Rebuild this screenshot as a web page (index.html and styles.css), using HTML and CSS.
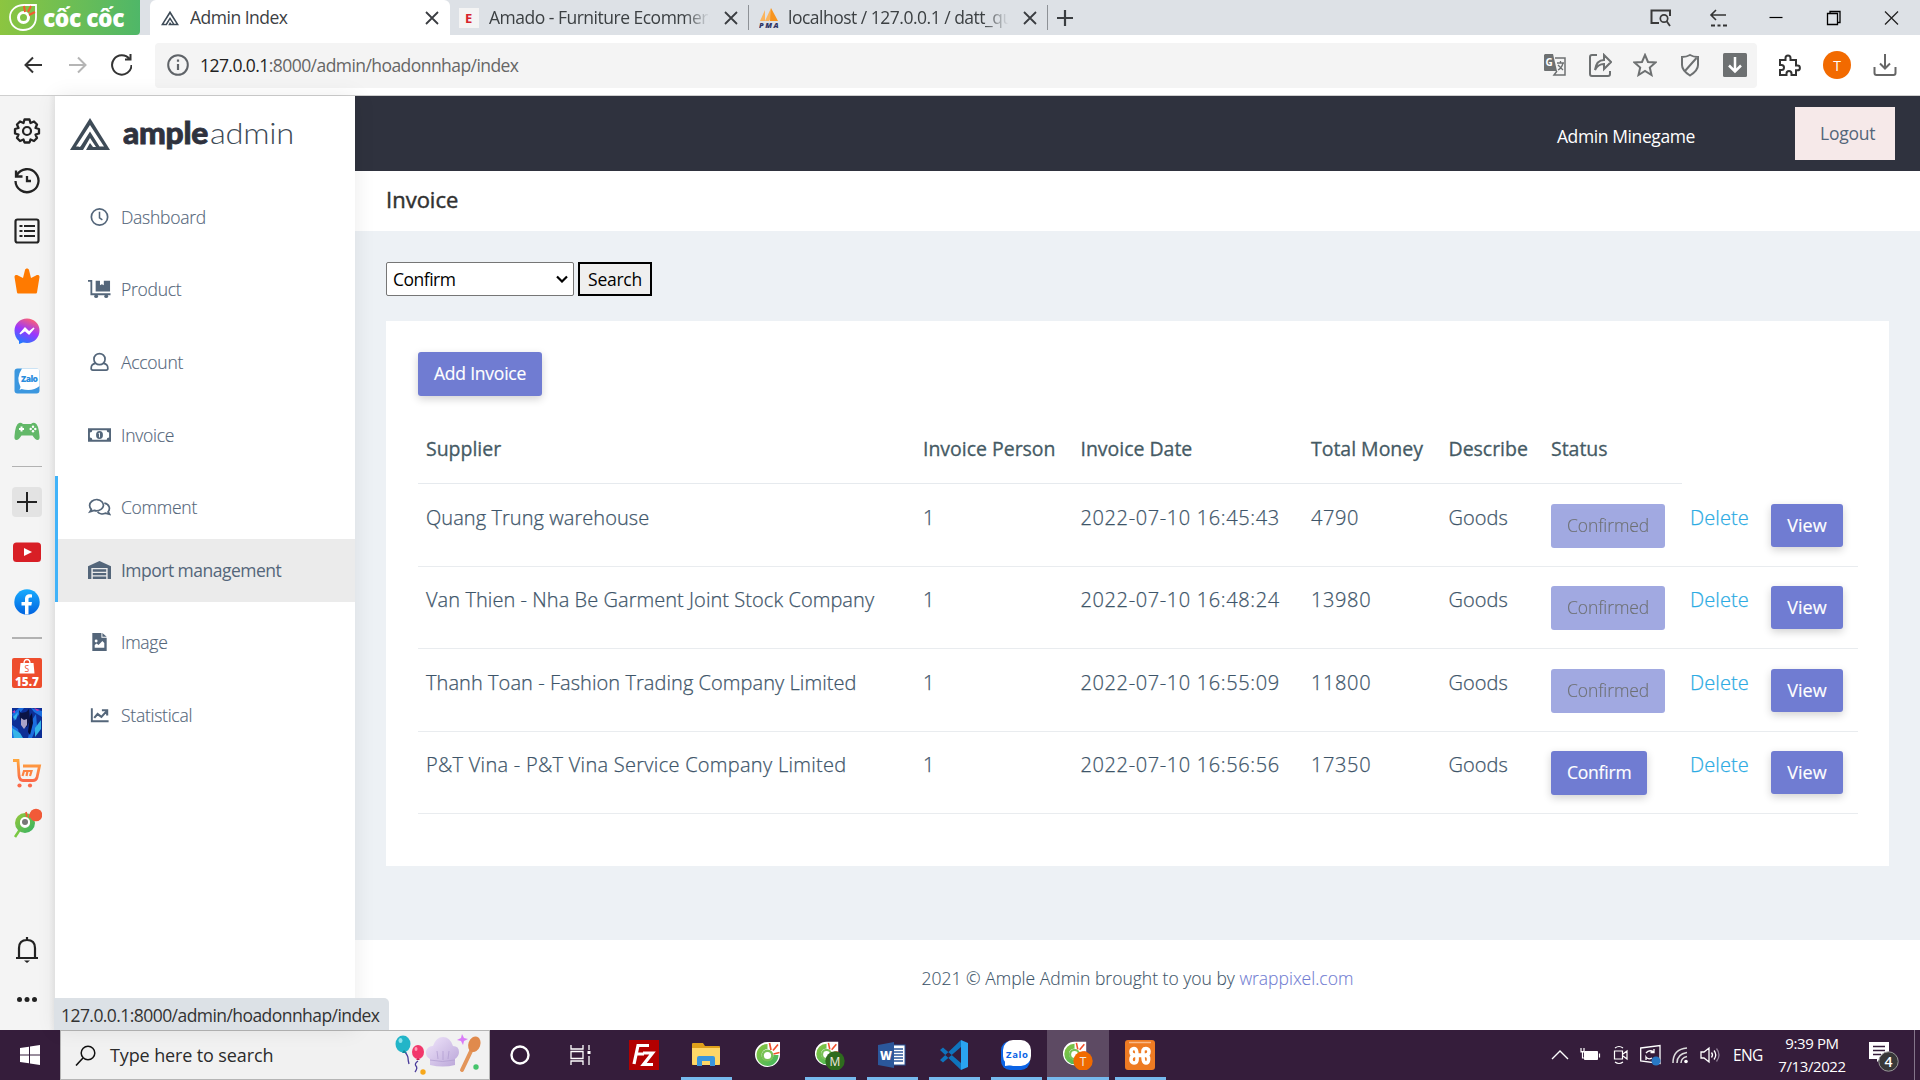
FILE: index.html
```
<!DOCTYPE html>
<html lang="en">
<head>
<meta charset="utf-8">
<title>Admin Index</title>
<link rel="stylesheet" href="styles.css">
</head>
<body>
<svg class="defs" aria-hidden="true">
  <defs>
    <linearGradient id="leaf" x1="0" y1="0" x2="1" y2="1"><stop offset="0" stop-color="#8dc63f"/><stop offset="1" stop-color="#3fb55f"/></linearGradient>
    <linearGradient id="msg" x1=".3" y1="1" x2=".7" y2="0"><stop offset="0" stop-color="#1a7dff"/><stop offset=".5" stop-color="#9a36ff"/><stop offset="1" stop-color="#ff6270"/></linearGradient>
    <linearGradient id="fb" x1="0" y1="0" x2="0" y2="1"><stop offset="0" stop-color="#18acfe"/><stop offset="1" stop-color="#0163e0"/></linearGradient>
    <linearGradient id="cart" x1="0" y1="0" x2="0" y2="1"><stop offset="0" stop-color="#ffa63d"/><stop offset="1" stop-color="#fb6a4a"/></linearGradient>
    <linearGradient id="hat" x1="0" y1="0" x2="1" y2="1"><stop offset="0" stop-color="#f1e6fb"/><stop offset="1" stop-color="#b9a5d8"/></linearGradient>
  </defs>
  <symbol id="coccoc" viewBox="0 0 30 30">
    <path d="M15 2h12v12a12.500 12.500 0 1 1-12-12z" fill="#fff"/>
    <path d="M14.500 4A11 11 0 1 0 25.500 15h-5A6 6 0 1 1 14.500 9z" fill="url(#leaf)"/>
    <circle cx="14.500" cy="15.500" r="6" fill="#79c257"/>
    <circle cx="14.500" cy="15.500" r="3.600" fill="#fff"/>
    <path d="M16.500 3l1.500 7M25 4.500l-5 6M26.500 12.500l-6 1.500" stroke="#f0502d" stroke-width="1.700" fill="none"/>
  </symbol>
  <symbol id="ample" viewBox="0 0 40 32">
    <path d="M20 0L0 32H13L20 20L26 29H23L20 25L16 32H40z M20 7L34 28.500H29.500L20 13.500L10.500 28.500H6z" fill="#3e4b57" fill-rule="evenodd"/>
    <path d="M20 10L9 29" stroke="#fff" stroke-width="1"/>
  </symbol>
</svg>

<header class="tabs">
  <div class="brand">
    <svg width="29" height="35" viewBox="0 0 29 35"><path d="M15 5h12v12c0 8-5 13-13 13S1 24 1 17 7 5 15 5z" fill="none" stroke="#fff" stroke-width="1.800"/><circle cx="14.500" cy="17.500" r="5" fill="none" stroke="#fff" stroke-width="3"/><path d="M15 6l1 6M22 6l-3 6M26 12l-6 3" stroke="#f4592f" stroke-width="2"/></svg>
    <svg class="brand-word" width="82" height="35" viewBox="0 0 82 35"><text x="0" y="27" textLength="81" lengthAdjust="spacingAndGlyphs">cốc cốc</text></svg>
  </div>
  <div class="tab tab-on">
    <svg width="18" height="16"><use href="#ample"/></svg><span class="tab-text">Admin Index</span>
    <svg class="x" width="14" height="14" viewBox="0 0 14 14"><path d="M1 1l12 12M13 1L1 13"/></svg>
  </div>
  <div class="tab">
    <svg width="20" height="20"><rect width="20" height="20" fill="#f4f4f4"/><text x="6" y="15" font-family="Open Sans" font-weight="700" font-size="13" fill="#d7232b">E</text></svg><span class="tab-text fade">Amado - Furniture Ecommerc</span>
    <svg class="x" width="14" height="14" viewBox="0 0 14 14"><path d="M1 1l12 12M13 1L1 13"/></svg>
  </div>
  <div class="tab tab-b">
    <svg width="20" height="20" viewBox="0 0 20 20"><path d="M1 13L6 2v11zM6 13L12 0v10l-2 3z" fill="#fbb45c"/><path d="M12 0l7 13h-8z" fill="#f7941e"/><text x="0" y="19.500" font-family="Open Sans" font-weight="800" font-style="italic" font-size="7.500" textLength="19" fill="#2f3565">PMA</text></svg><span class="tab-text fade">localhost / 127.0.0.1 / datt_qu</span>
    <svg class="x" width="14" height="14" viewBox="0 0 14 14"><path d="M1 1l12 12M13 1L1 13"/></svg>
  </div>
  <svg class="plus" width="16" height="16" viewBox="0 0 16 16"><path d="M8 0v16M0 8h16" stroke="#3a3d41" stroke-width="2.200"/></svg>
  <div class="win">
    <svg viewBox="0 0 22 18"><path d="M10 14H2.500V1.500H21V7" fill="none" stroke="#3a3a3a" stroke-width="2"/><circle cx="15" cy="9.500" r="3.700" fill="none" stroke="#3a3a3a" stroke-width="1.700"/><path d="M17.500 12l3.500 5" stroke="#3a3a3a" stroke-width="1.800"/></svg>
    <svg viewBox="0 0 22 18"><path d="M19 6H4M9 1L4 6l5 5" fill="none" stroke="#333" stroke-width="1.600"/><path d="M4 16.500h4M10.500 16.500h3M16 16.500h4" stroke="#333" stroke-width="1.800"/></svg>
    <svg viewBox="0 0 22 18"><path d="M4.500 8.500h13" stroke="#000" stroke-width="1.200"/></svg>
    <svg viewBox="0 0 22 18"><path d="M4.500 4.500h10v11h-10zM7 4.500v-2h10v11h-2.500" fill="none" stroke="#000" stroke-width="1.300"/></svg>
    <svg viewBox="0 0 22 18"><path d="M4 2.500l13 13M17 2.500l-13 13" stroke="#222" stroke-width="1.300"/></svg>
  </div>
</header>

<div class="toolbar">
  <svg class="nav" width="22" height="22" viewBox="0 0 22 22"><path d="M20 11H4M11 3.500L3.500 11l7.500 7.500" fill="none" stroke="#333" stroke-width="2"/></svg>
  <svg class="nav" width="22" height="22" viewBox="0 0 22 22"><path d="M3 11h16M12 3.500L19.500 11 12 18.500" fill="none" stroke="#b5b5b5" stroke-width="2"/></svg>
  <svg class="nav" width="22" height="22" viewBox="0 0 22 22"><path d="M19.500 5A9.700 9.700 0 1 0 21.500 11M20.500 0v5.500h-5.500" fill="none" stroke="#333" stroke-width="2"/></svg>
  <div class="address">
    <svg width="22" height="22" viewBox="0 0 22 22"><circle cx="11" cy="11" r="9.800" fill="none" stroke="#5f6368" stroke-width="2"/><path d="M11 10v6M11 5.500v2.200" stroke="#5f6368" stroke-width="2.200"/></svg>
    <span class="url"><b>127.0.0.1</b>:8000/admin/hoadonnhap/index</span>
    <div class="addr-icons">
      <svg viewBox="0 0 24 24"><path d="M2 1h8l4 17H2a1 1 0 0 1-1-1V2z" fill="#6d7071"/><path d="M12 5h10v17H11l3-4" fill="none" stroke="#6d7071" stroke-width="1.500"/><path d="M14 10h7M17.500 8v2M20 10c-1 4-3 6-5 7M15 12l5 5" stroke="#6d7071" stroke-width="1.300" fill="none"/><text x="2.500" y="13" font-size="10" font-weight="700" font-family="Open Sans" fill="#fff">G</text></svg>
      <svg viewBox="0 0 24 24"><path d="M9 2H4a2 2 0 0 0-2 2v17a2 2 0 0 0 2 2h16a2 2 0 0 0 2-2v-3M7 17c1-7 4-10 9-10V2l7 7-7 7v-5c-4 0-7 2-9 6z" fill="none" stroke="#6d7071" stroke-width="2"/></svg>
      <svg viewBox="0 0 24 24"><path d="M12 2l3 7 7.500.5-5.700 5 1.700 7.500-6.500-4-6.500 4 1.700-7.500-5.700-5L9 9z" fill="none" stroke="#6d7071" stroke-width="2"/></svg>
      <svg viewBox="0 0 24 24"><path d="M12 2q3.500 2 8 2v8c0 5-4 8-8 10.500-4-2.500-8-5.500-8-10.500V4q4.500 0 8-2zM6.500 18.500L18.500 5" fill="none" stroke="#6d7071" stroke-width="2"/></svg>
      <svg viewBox="0 0 24 24"><rect width="24" height="24" rx="1.500" fill="#6d7071"/><path d="M12 4v14M6 12.500l6 6 6-6" fill="none" stroke="#fff" stroke-width="2.500"/></svg>
    </div>
  </div>
  <svg class="ext" width="24" height="24" viewBox="0 0 24 24"><path d="M3 7h5.500V5a2.500 2.500 0 0 1 5 0v2H19v5.500h1.500a2.300 2.300 0 0 1 0 4.800H19V22h-4.500v-1.500a2.500 2.500 0 0 0-5 0V22H3v-5h1.500a2.500 2.500 0 0 0 0-5H3z" fill="none" stroke="#333" stroke-width="2"/></svg>
  <span class="avatar">T</span>
  <svg width="24" height="24" viewBox="0 0 24 24"><path d="M12 1v14M7 10.500l5 5 5-5M1.500 14v6a2 2 0 0 0 2 2h17a2 2 0 0 0 2-2v-6" fill="none" stroke="#666" stroke-width="2"/></svg>
</div>

<div class="viewport">
  <aside class="rail">
    <svg viewBox="0 0 30 30"><path d="M12.500 3.500h5l1 3.500 3.500-1.500 3 3-1.500 3.500 3.500 1v4.500l-3.500 1 1.500 3.500-3 3-3.500-1.500-1 3h-5l-1-3L8 25l-3-3 1.500-3.500-3.500-1V13l3.500-1L5 8.500l3-3L11.500 7z" fill="none" stroke="#222" stroke-width="2.300" stroke-linejoin="round"/><circle cx="15" cy="15" r="4" fill="none" stroke="#222" stroke-width="2.200"/></svg>
    <svg viewBox="0 0 30 30"><path d="M4 4.500v6h6.500M5 9a11.500 11.500 0 1 1-1.500 6M15 10v5h4" fill="none" stroke="#222" stroke-width="2.300"/></svg>
    <svg viewBox="0 0 30 30"><rect x="3.500" y="3.500" width="23" height="23" rx="2" fill="none" stroke="#222" stroke-width="2.200"/><path d="M7.500 10h3M12 10h11M7.500 15h3M12 15h11M7.500 20h3M12 20h11" stroke="#222" stroke-width="2.100"/></svg>
    <svg viewBox="0 0 30 30"><path d="M2.500 11c0-2 2-2.500 3.500-1.500l5 2.500 2-8c.5-2 3.500-2 4 0l2 8 5-2.500c1.500-1 3.500-.5 3.500 1.500L25 26.500c-.3 1-1 1-2 1H7c-1 0-1.700 0-2-1z" fill="#ff7a00"/></svg>
    <svg viewBox="0 0 30 30"><path d="M15 2.500c7 0 12.500 5 12.500 12S22 27 15 27l-4-.5-4 1.500v-3C4 22.500 2.500 19 2.500 14.500c0-7 5.500-12 12.500-12z" fill="url(#msg)"/><path d="M8 18l5-6 4 4 5-4-5 6-4-3.500z" fill="#fff" stroke="#fff" stroke-width="1.500"/></svg>
    <svg viewBox="0 0 30 30"><rect x="2.500" y="2.500" width="25" height="25" rx="3" fill="#3b97df"/><path d="M10 2.500h15q2.500 0 2.500 2.500v15q-7 6-18 3l-2 1 1-3q-5-9 1.500-18.500z" fill="#fff"/><text x="9" y="15.500" font-size="8.500" font-family="Open Sans" font-weight="800" textLength="17" fill="#2a8ddd">Zalo</text></svg>
    <svg viewBox="0 0 30 30"><path d="M7 7q2-1 4 1h8q2-2 4-1 3.500 1 4.500 13 .5 4-2 4-2 0-5-4.500h-11Q6.500 24 4.500 24 2 24 2.500 20 3.500 8 7 7z" fill="#62b868"/><path d="M9.500 10.500v5M7 13h5" stroke="#fff" stroke-width="2"/><g fill="#fff"><circle cx="21" cy="10.800" r="1.200"/><circle cx="21" cy="15.200" r="1.200"/><circle cx="18.700" cy="13" r="1.200"/><circle cx="23.300" cy="13" r="1.200"/></g></svg>
    <i class="rule"></i>
    <svg class="add" viewBox="0 0 30 30"><path d="M15 5v20M5 15h20" stroke="#222" stroke-width="2"/></svg>
    <svg viewBox="0 0 30 30"><rect x="1" y="5.500" width="28" height="19.500" rx="3.500" fill="#d81f26"/><path d="M12 11l8 4-8 4z" fill="#fff"/></svg>
    <svg viewBox="0 0 30 30"><circle cx="15" cy="15" r="12.700" fill="url(#fb)"/><path d="M13 27.500v-9H9.500V15H13v-2.500c0-4 2-5.700 7-5v3c-3 0-3.500.2-3.500 2V15H20l-.7 3.500h-2.800v9z" fill="#fff"/></svg>
    <i class="rule thick"></i>
    <svg viewBox="0 0 30 30"><rect width="30" height="30" rx="2" fill="#ee4d2d"/><path d="M8.500 5h13l1 10.500h-15z" fill="#fff"/><path d="M12 5.500q0-4 3-4t3 4" stroke="#fff" stroke-width="1.300" fill="none"/><text x="12.500" y="13.500" font-size="8.500" font-family="Open Sans" fill="#ee4d2d">S</text><text x="3" y="27.500" font-size="12.500" font-family="Open Sans" font-weight="800" textLength="24" lengthAdjust="spacingAndGlyphs" fill="#fff">15.7</text></svg>
    <svg viewBox="0 0 30 30"><rect width="30" height="30" fill="#0d2f96"/><path d="M0 6l7-6h5L2 13zM19 0l11 3v6l-8-5zM0 17l6 4 2 9H0zM20 12l4-6 1 12-5 12h-4z" fill="#1b6fe0"/><path d="M0 20l8 5 3 5H2zM23 20l6-8v9l-6 8zM1 9l5-5-2 8z" fill="#35b4e8"/><path d="M7 2l2 3 5-1 3-3 1 11-3 7-4-2-3-6z" fill="#0b1445"/><path d="M9 10l3 2 3-1v6l-3 4-3-4z" fill="#a9a3c8"/><path d="M18 8l2-3 1 10-3 12-2-3z" fill="#060b33"/><path d="M22 0l6 2-3 1zM0 4l3-2v3z" fill="#c43ab0"/></svg>
    <svg viewBox="0 0 30 30"><path d="M1 2.500h5l1 15q.5 5 4 5h10q3 0 4-3l2.500-11.500H11" fill="none" stroke="url(#cart)" stroke-width="2.800"/><path d="M10.500 18l1.500-5h7.500L18 18M15.500 13l-1 5" fill="none" stroke="#fd8342" stroke-width="2.200"/><circle cx="7.500" cy="27.500" r="2.100" fill="#fb6a4a"/><circle cx="18" cy="27.500" r="2.100" fill="#fb6a4a"/></svg>
    <svg viewBox="0 0 30 30"><path d="M9 20l-6 9" stroke="#7ac943" stroke-width="2.500"/><circle cx="13" cy="15" r="7.500" fill="none" stroke="url(#leaf)" stroke-width="5"/><circle cx="13" cy="14" r="5" fill="#fff"/><circle cx="13" cy="14" r="3" fill="#777"/><path d="M14 4l1 5M18.500 6l-1 4" stroke="#f15a38" stroke-width="1.800"/><circle cx="24" cy="7" r="6.300" fill="#f15a38"/></svg>
    <svg class="bell" viewBox="0 0 30 30"><path d="M7 22V13q0-8 8-8t8 8v9M4 23h22M15 2v3" fill="none" stroke="#222" stroke-width="2.200"/><path d="M12 25.500h6l-3 2.500z" fill="#222"/></svg>
    <svg viewBox="0 0 30 30"><g fill="#222"><circle cx="7.500" cy="14.500" r="2.500"/><circle cx="15" cy="14.500" r="2.500"/><circle cx="22.500" cy="14.500" r="2.500"/></g></svg>
  </aside>

  <nav class="sidebar">
    <div class="logo"><svg width="40" height="32"><use href="#ample"/></svg>
      <svg width="172" height="40" viewBox="0 0 172 40"><text x="0" y="26" class="lg-b" textLength="85" lengthAdjust="spacingAndGlyphs">ample</text><text x="87" y="26" class="lg-l" textLength="84" lengthAdjust="spacingAndGlyphs">admin</text></svg></div>
    <a class="item"><svg viewBox="0 0 24 20"><circle cx="12" cy="10" r="8.500" fill="none" stroke="#54667a" stroke-width="1.800"/><path d="M12 4.500V11l3 2" fill="none" stroke="#54667a" stroke-width="1.600"/></svg>Dashboard</a>
    <a class="item"><svg viewBox="0 0 24 20"><path d="M0 1.500h3.500V15.500h20" fill="none" stroke="#54667a" stroke-width="1.900"/><path d="M8 1.500h4.500v4.500l2-1 2 1V1.500H23v11H8z" fill="#54667a"/><circle cx="8.500" cy="17.500" r="2" fill="#54667a"/><circle cx="19" cy="17.500" r="2" fill="#54667a"/></svg>Product</a>
    <a class="item"><svg viewBox="0 0 24 20"><circle cx="12" cy="7" r="5.800" fill="none" stroke="#54667a" stroke-width="1.800"/><path d="M8 11.500q-4.700.5-4.700 5 0 2 1.700 2h14q1.700 0 1.700-2 0-4.500-4.700-5" fill="none" stroke="#54667a" stroke-width="1.800"/></svg>Account</a>
    <a class="item"><svg viewBox="0 0 24 20"><path d="M0 3h24v14H0z M4.500 5q0 2.500-2.500 2.500v5q2.500 0 2.500 2.500h15q0-2.500 2.500-2.500v-5q-2.500 0-2.500-2.500z" fill="#54667a" fill-rule="evenodd"/><ellipse cx="12" cy="10" rx="3.600" ry="4.200" fill="#54667a"/><path d="M11 8.500l1-.5v4.500" stroke="#fff" fill="none"/></svg>Invoice</a>
    <a class="item edge"><svg viewBox="0 0 24 20"><path d="M3.500 12.500C1 10 1 6.500 4 4S12 1.500 14.500 4.500s2 6-1 8-6 1.500-7 1l-4.500 1.500z" fill="none" stroke="#54667a" stroke-width="1.800"/><path d="M17 6c5.500 1 6.500 6 4 9l1.500 2.500-4.500-1c-3 1.300-6.500.5-8-1.500" fill="none" stroke="#54667a" stroke-width="1.800"/></svg>Comment</a>
    <a class="item edge current"><svg viewBox="0 0 24 20"><path d="M0 19.500V6L12 .5 24 6v13.500h-3.500V8h-17v11.500z" fill="#54667a"/><path d="M5 10.500h14M5 14.300h14M5 18.100h14" stroke="#54667a" stroke-width="2.400"/></svg>Import management</a>
    <a class="item gap"><svg viewBox="0 0 24 20"><path d="M4.500.5H14v5h5.500v14h-15z" fill="#54667a"/><path d="M15 .5l4.500 4H15z" fill="#54667a"/><circle cx="8.500" cy="9" r="1.500" fill="#fff"/><path d="M7 16v-3l2-1.500 2 1.500 4-4 2 2v5z" fill="#fff"/></svg>Image</a>
    <a class="item"><svg viewBox="0 0 24 20"><path d="M4 3v13.500h17.500" fill="none" stroke="#54667a" stroke-width="2"/><path d="M6.500 13L10 9l4 3 5-5.500M14.500 5H20v5.500" fill="none" stroke="#54667a" stroke-width="2.200"/></svg>Statistical</a>
  </nav>

  <main class="page">
    <div class="topbar"><span class="user">Admin Minegame</span><a class="logout">Logout</a></div>
    <h4 class="title">Invoice</h4>
    <section class="content">
      <form class="filter">
        <div class="select"><span>Confirm</span><svg width="12" height="8" viewBox="0 0 12 8"><path d="M1 1.500l5 5 5-5" fill="none" stroke="#000" stroke-width="2.200"/></svg></div>
        <div class="search">Search</div>
      </form>
      <div class="card">
        <a class="btn">Add Invoice</a>
        <table class="grid">
          <colgroup><col class="c1"><col class="c2"><col class="c3"><col class="c4"><col class="c5"><col class="c6"><col class="c7"><col class="c8"></colgroup>
          <tr><th>Supplier</th><th>Invoice Person</th><th>Invoice Date</th><th>Total Money</th><th>Describe</th><th>Status</th><td class="blank"></td><td class="blank"></td></tr>
          <tr><td>Quang Trung warehouse</td><td class="n">1</td><td class="n">2022-07-10 16:45:43</td><td class="n">4790</td><td>Goods</td><td><a class="btn off">Confirmed</a></td><td><a class="del">Delete</a></td><td><a class="btn view">View</a></td></tr>
          <tr><td>Van Thien - Nha Be Garment Joint Stock Company</td><td class="n">1</td><td class="n">2022-07-10 16:48:24</td><td class="n">13980</td><td>Goods</td><td><a class="btn off">Confirmed</a></td><td><a class="del">Delete</a></td><td><a class="btn view">View</a></td></tr>
          <tr><td>Thanh Toan - Fashion Trading Company Limited</td><td class="n">1</td><td class="n">2022-07-10 16:55:09</td><td class="n">11800</td><td>Goods</td><td><a class="btn off">Confirmed</a></td><td><a class="del">Delete</a></td><td><a class="btn view">View</a></td></tr>
          <tr><td class="wide">P&amp;T Vina - P&amp;T Vina Service Company Limited</td><td class="n">1</td><td class="n">2022-07-10 16:56:56</td><td class="n">17350</td><td>Goods</td><td><a class="btn">Confirm</a></td><td><a class="del">Delete</a></td><td><a class="btn view">View</a></td></tr>
        </table>
      </div>
    </section>
    <footer class="foot">2021 © Ample Admin brought to you by&nbsp;<a>wrappixel.com</a></footer>
  </main>
  <div class="status">127.0.0.1:8000/admin/hoadonnhap/index</div>
</div>

<div class="taskbar">
  <div class="start"><svg width="20" height="20" viewBox="0 0 20 20"><path d="M0 3l9-1.300V9.500H0zM10 1.500L20 0v9.500H10zM0 10.500h9v7.800L0 17zM10 10.500h10V20l-10-1.500z" fill="#fff"/></svg></div>
  <div class="find">
    <svg width="21" height="21" viewBox="0 0 21 21"><circle cx="13" cy="8" r="6.800" fill="none" stroke="#111" stroke-width="1.500"/><path d="M8 13l-7 7.500" stroke="#111" stroke-width="1.600"/></svg>
    <span>Type here to search</span>
    <svg class="party" width="88" height="42" viewBox="0 0 88 42"><ellipse cx="8" cy="10" rx="7.500" ry="8.500" fill="#22b5c8"/><ellipse cx="5.500" cy="6.500" rx="2" ry="2.500" fill="#8be3ec"/><path d="M10 18q3 4 3 6t1 6M23 27q-4 3-2 5t-1 6" stroke="#4a3c9a" fill="none" stroke-width="1.300"/><path d="M7 19l2-3 3 3z" fill="#128a9c"/><ellipse cx="23" cy="18" rx="6" ry="7" fill="#f2376b"/><path d="M21 26l2-2 2 2z" fill="#c71f50"/><ellipse cx="21" cy="15" rx="1.500" ry="2" fill="#ff9ab5"/><path d="M35 25q-5-3-4-8 2-5 7-5 3-9 10-9t10 9q6 0 6 6 0 4-4 7v6q-12 3-25 0z" fill="url(#hat)"/><path d="M35 26q12 3 25 0M42 17l1 8M48 17v9M54 17l-1 8" stroke="#b29fd2" fill="none" stroke-width=".8"/><path d="M67 0l2 4 4 1-4 2-1 4-2-4-4-1 4-2z" fill="#d97bf7"/><path d="M77 15L67 36" stroke="#e39559" stroke-width="4" stroke-linecap="round"/><ellipse cx="79.500" cy="10.500" rx="6" ry="8" transform="rotate(20 80 10)" fill="#e08a4c"/><circle cx="28" cy="38" r="2.700" fill="#f7a81b"/><circle cx="81" cy="33" r="2.700" fill="#45c46b"/></svg>
  </div>
  <div class="slot first"><svg width="22" height="22" viewBox="0 0 22 22"><circle cx="11" cy="11" r="8.500" fill="none" stroke="#fff" stroke-width="2.400"/></svg></div>
  <div class="slot second"><svg width="22" height="20" viewBox="0 0 22 20"><path d="M1 0v4h12V0M1 20v-4h12v4M1 6.500h12v7H1zM19 0v5M19 11v9" fill="none" stroke="#fff" stroke-width="1.300"/><path d="M17.500 6h3v3h-3z" fill="#fff"/></svg></div>
  <div class="slot"><svg viewBox="0 0 30 30"><rect width="30" height="30" fill="#b30000"/><path d="M5 24L9 5.500h11M7 14H15M14 13h9.500L14.500 24.500H24" fill="none" stroke="#fff" stroke-width="3.200"/></svg></div>
  <div class="slot run"><svg viewBox="0 0 30 30"><path d="M1 4q0-1 1-1h10l2 3h14q1 0 1 1v18H1z" fill="#dfa01a"/><path d="M1 8h28v15q0 2-2 2H3q-2 0-2-2z" fill="#ffd767"/><path d="M6 26v-8q0-2 2-2h14q2 0 2 2v8h-5v-5h-8v5z" fill="#3a96dd"/></svg></div>
  <div class="slot"><svg viewBox="0 0 30 30"><use href="#coccoc"/></svg></div>
  <div class="slot run"><svg viewBox="0 0 30 30"><use href="#coccoc" x="-2" width="28" height="28"/><circle cx="20" cy="21" r="9.700" fill="#2e6b1e"/><text x="14.500" y="25.500" class="badge-t">M</text></svg></div>
  <div class="slot run"><svg viewBox="0 0 30 30"><rect x="14" y="5" width="14" height="20" fill="#fff" stroke="#2b579a"/><path d="M17 9h9M17 12h9M17 15h9M17 18h9M17 21h9" stroke="#2b579a" stroke-width="1.400"/><path d="M1 5l16-3v26L1 25z" fill="#2b579a"/><text x="3" y="20" font-family="Open Sans" font-weight="800" font-size="12" textLength="12" lengthAdjust="spacingAndGlyphs" fill="#fff">W</text></svg></div>
  <div class="slot run"><svg viewBox="0 0 30 30"><path d="M1 10l3-2.500L22 23v7zM1 20l3 2.500L22 7V0z" fill="#0f74bd"/><path d="M22 0l7 3v24l-7 3z" fill="#2aa4f0"/></svg></div>
  <div class="slot run"><svg viewBox="0 0 30 30"><rect y="1" width="29" height="29" rx="9" fill="#0b63e5"/><rect x="2" width="28" height="26" rx="10" fill="#fff"/><path d="M4 20v6l7-1z" fill="#fff"/><text x="5" y="17.500" font-size="9.500" font-family="Open Sans" font-weight="700" textLength="22" fill="#0b63e5">Zalo</text></svg></div>
  <div class="slot run active"><svg viewBox="0 0 30 30"><use href="#coccoc" x="-2" width="28" height="28"/><circle cx="20" cy="21" r="9.700" fill="#f06a00"/><text x="16.800" y="25.500" class="badge-t">T</text></svg></div>
  <div class="slot run"><svg viewBox="0 0 30 30"><rect width="30" height="30" rx="3" fill="#ee7b23"/><path d="M9 8.500c-4 0-4 6 0 6.500h12c4-.5 4-6.500 0-6.500s-3 3-3 6.500 0 8 3 8 4-7 0-7.500H9c-4 .5-4 7.500 0 7.500s3-4.500 3-8-1-6.500-3-6.500z" fill="none" stroke="#fff" stroke-width="3.600"/><path d="M4 2.500h22" stroke="#f8b98a" stroke-width="1.500"/></svg></div>
  <div class="tray">
    <svg viewBox="-7 0 30 24"><path d="M0 16l8-8 8 8" fill="none" stroke="#fff" stroke-width="1.400"/></svg>
    <svg viewBox="-5 0 30 24"><path d="M4.500 8.500h13v8h-13z" fill="#fff" stroke="#fff"/><path d="M19.500 10.500v4M2.500 9v6h2M.5 8.500h4M1 5v4h3V5" stroke="#fff" stroke-width="1.200" fill="none"/></svg>
    <svg viewBox="-8 0 30 24"><path d="M1.500 8h8v8h-8zM10 11l4-3v8l-4-3M2 5q4-3 8 0M2 19q4 3 8 0" fill="none" stroke="#fff" stroke-width="1.200"/></svg>
    <svg viewBox="-5 0 30 24"><path d="M.7 5L20 2.500v18L.7 18z" fill="none" stroke="#fff" stroke-width="1.300"/><path d="M6 10q3-4 8-1M14 6v3.500h-3.500M12 15q-4 2-6-1v3" fill="none" stroke="#fff" stroke-width="1.300"/><circle cx="16" cy="18" r="4.500" fill="#2878c5"/></svg>
    <svg viewBox="-7 0 30 24"><path d="M1 20Q1 6 15 5M5 20q0-9 10-10.500M9 20q0-5 6-6.500" fill="none" stroke="#ddd" stroke-width="1.500"/><circle cx="14" cy="18.500" r="1.800" fill="#fff"/></svg>
    <svg viewBox="-5 0 30 24"><path d="M1 9h3l5-4v14l-5-4H1zM11.500 9.500q2 2.500 0 5M14 7.500q3.500 4.500 0 9" fill="none" stroke="#fff" stroke-width="1.300"/><path d="M16.500 5.500q5 6.500 0 13" fill="none" stroke="#8f7e96" stroke-width="1.300"/></svg>
    <span class="lang">ENG</span>
    <div class="clock"><span>9:39 PM</span><span>7/13/2022</span></div>
    <div class="note"><svg width="32" height="32" viewBox="0 0 32 32"><path d="M1 1h20v17h-9l-3 3v-3H1z" fill="#fff"/><path d="M5 5.500h12M5 9.500h12M5 13.500h8" stroke="#351d3b" stroke-width="1.300"/><circle cx="20.500" cy="20.500" r="9.700" fill="#383838" stroke="#999"/><text x="16.500" y="25.500" font-family="Open Sans" font-weight="600" font-size="14" fill="#fff">4</text></svg></div>
    <i class="desk"></i>
  </div>
</div>
</body>
</html>
```
FILE: styles.css
```
*{box-sizing:border-box}
body{margin:0;width:1920px;height:1080px;overflow:hidden;display:flex;flex-direction:column;font-family:"Open Sans","Noto Sans",sans-serif;background:#fff}
svg{display:block;flex:none}
.defs{position:absolute;width:0;height:0}

/* tab strip */
.tabs{height:35px;background:#dde1e6;display:flex;align-items:center;font-size:17.500px;letter-spacing:-.5px;color:#3c4043;flex:none}
.brand{width:140px;height:35px;background:linear-gradient(90deg,#8cc540,#4fb768);display:flex;padding-left:9px;gap:5px;border-radius:0 0 4px 0}
.brand-word text{font:800 25px "Open Sans",sans-serif;fill:#fff}
.tab{display:flex;align-items:center;height:35px;padding-left:9px;width:299px;position:relative}
.tab:not(.tab-on)::after{content:"";position:absolute;right:0;top:5px;width:1px;height:25px;background:#8d9196}
.tab-on{background:#fff;margin-left:10px;width:300px;padding-left:11px;border-radius:6px 6px 0 0}
.tab-text{width:223px;margin-left:10px;overflow:hidden;white-space:nowrap;line-height:30px;padding-bottom:1px}
.tab-on .tab-text{width:227px;margin-left:11px}
.tab-b{padding-left:10px}
.tab-b .tab-text{width:223px;margin-left:9px}
.fade{-webkit-mask-image:linear-gradient(90deg,#000 88%,transparent 99%);mask-image:linear-gradient(90deg,#000 88%,transparent 99%)}
.x{margin-left:12px;stroke:#3a3d41;stroke-width:1.800}
.tab-on .x{margin-left:8px}
.plus{margin-left:9px}
.win{margin-left:auto;display:flex;gap:36px;padding-right:17px}
.win svg{width:22px;height:18px}

/* toolbar */
.toolbar{height:61px;border-bottom:1px solid #cfcfcf;display:flex;align-items:center;padding-left:22px;flex:none}
.nav{margin-right:22px}
.address{width:1602px;height:45px;background:#f4f4f4;border-radius:4px;display:flex;align-items:center;padding:0 10px 0 12px;margin-left:1px}
.url{font-size:17.500px;letter-spacing:-.56px;color:#666;margin-left:11px}
.url b{font-weight:400;color:#222}
.addr-icons{display:flex;gap:21px;margin-left:auto}
.addr-icons svg{width:24px;height:24px}
.ext{margin-left:20px}
.avatar{width:28px;height:28px;border-radius:50%;background:#f26a00;color:#fff;font-size:14px;display:grid;place-items:center;margin:0 22px}

/* browser side rail */
.viewport{height:934px;display:flex;position:relative;flex:none}
.rail{width:55px;background:linear-gradient(90deg,#f4f4f4 49px,#e9e9e9);display:flex;flex-direction:column;align-items:center;padding:20px 1px 0 0;gap:20px}
.rail svg{width:30px;height:30px}
.rule{height:1px;width:30px;background:#b2b2b2}
.rule.thick{height:2px;margin-bottom:-1px}
.add{background:#e3e3e3;border-radius:4px}
.rail .bell{margin-top:auto}
.rail svg:last-child{margin-bottom:15px}

/* dashboard menu */
.sidebar{width:300px;background:#fff;box-shadow:1px 0 20px rgba(0,0,0,.08);z-index:1;font-weight:300;font-size:17.500px;letter-spacing:-.26px;color:#54667a;-webkit-text-stroke:.15px}
.logo{height:79px;padding:22px 0 0 15px;margin-bottom:10px;display:flex;gap:13px}
.lg-b{font:900 30px Lato,sans-serif;fill:#2f323e;stroke:#2f323e;stroke-width:.8px}
.lg-l{font:300 30px Lato,sans-serif;fill:#3e4b57;stroke:none}
.item{height:63px;display:flex;align-items:center;padding-left:33px;gap:10px;margin-bottom:9.700px}
.item svg{width:23px;height:20px}
.edge{border-left:3px solid #41b3f9;padding-left:30px;margin-bottom:0}
.current{background:#ebebeb;font-weight:400;letter-spacing:-.52px;-webkit-text-stroke:0}
.gap{margin-top:9px}

/* dashboard page */
.page{width:1565px;background:#edf1f5;display:flex;flex-direction:column}
.topbar{height:75px;background:#2f323e;display:flex;justify-content:flex-end;align-items:flex-start;padding:11px 25px 0 0;font-size:17.500px}
.user{color:#fff;margin:17px 100px 0 0;letter-spacing:-.4px}
.logout{width:100px;height:53px;background:#f6e9e9;color:#54667a;padding:14px 0 0 25px;letter-spacing:-.25px}
.title{margin:0;height:60px;background:#fff;padding:11px 0 0 31px;font:500 22px/34px "Open Sans",sans-serif;color:#313131;letter-spacing:0;-webkit-text-stroke:.45px}
.content{height:709px;padding:31px 31px 0}
.filter{display:flex;gap:4px;margin-bottom:25px;height:34px;font-size:17.500px;color:#000;letter-spacing:-.5px}
.select{width:188px;border:1px solid #767676;border-radius:2px;background:#fff;display:flex;justify-content:space-between;align-items:center;padding:0 5px 0 6px}
.search{width:74px;border:2px solid #000;background:#efefef;display:grid;place-items:center;letter-spacing:-.25px}
.card{height:545px;background:#fff;padding:31px 31px 31px 32px}
.btn{display:inline-block;height:44px;line-height:43px;padding:0 16px;border-radius:3px;background:#707cd2;color:#fff;font-weight:400;font-size:17.500px;letter-spacing:-.22px;box-shadow:0 3px 8px rgba(0,0,0,.18);white-space:nowrap;vertical-align:top;-webkit-text-stroke:.15px}
.off{opacity:.65;color:#212529;font-weight:300;box-shadow:none;letter-spacing:-.1px}
.view{width:72px;height:43px;padding:0;text-align:center;font-size:18px;letter-spacing:.1px}
.grid{border-collapse:separate;border-spacing:0;table-layout:fixed;width:1440px;margin-top:18px}
.c1{width:497px}.c2{width:157.500px}.c3{width:230.500px}.c4{width:137.500px}.c5{width:102.500px}.c6{width:139px}.c7{width:81px}.c8{width:95px}
th{height:70px;text-align:left;font-weight:400;font-size:19.500px;letter-spacing:-.02px;color:#455a64;border-bottom:1px solid #e6eaee;padding:0 8px;white-space:nowrap;-webkit-text-stroke:.3px}
td{height:82.600px;vertical-align:top;padding:19.500px 8px 0;font-weight:300;font-size:20px;letter-spacing:.06px;line-height:28px;color:#3e5569;border-bottom:1px solid #e9ecef;white-space:nowrap;-webkit-text-stroke:.25px}
td.wide{letter-spacing:.28px}
td.n{letter-spacing:.62px}
td.blank{height:70px;border:0}
.del{color:#2cabe3;letter-spacing:.1px}
.foot{height:90px;background:#fff;display:flex;justify-content:center;padding-top:26px;font-weight:300;font-size:17.500px;line-height:24px;color:#3e5569;-webkit-text-stroke:.1px}
.foot a{color:#707cd2}
.status{position:absolute;left:54px;bottom:0;width:335px;height:32px;background:#dce1e6;border-radius:0 5px 0 0;z-index:2;padding-left:7px;line-height:35px;font-size:17.500px;letter-spacing:-.56px;color:#333;white-space:nowrap}

/* windows taskbar */
.taskbar{height:50px;background:#351d3b;display:flex;flex:none;color:#fff}
.start{width:60px;display:grid;place-items:center}
.find{width:430px;background:#f1f1f1;border:1px solid #b5b5b5;display:flex;align-items:center;padding-left:14px;color:#2b2b2b;font-size:18px;letter-spacing:-.12px}
.find span{margin-left:14px}
.party{margin:0 6px 0 auto}
.slot{width:62px;display:grid;place-items:center}
.slot svg{width:30px;height:30px}
.first{width:60px}
.first svg{width:22px;height:22px}
.second svg{width:22px;height:20px}
.second{margin-right:1px}
.run{background:linear-gradient(#76b9ed,#76b9ed) center bottom/51px 3px no-repeat}
.active{background:linear-gradient(#76b9ed,#76b9ed) center bottom/62px 3px no-repeat,#5d4a63}
.badge-t{font:400 12px "Open Sans",sans-serif;fill:#f3e9e0}
.tray{margin-left:auto;display:flex;align-items:center}
.tray>svg{width:30px;height:24px}
.lang{font-size:15.500px;letter-spacing:-.6px;margin-left:8px;width:42px}
.clock{display:flex;flex-direction:column;align-items:center;width:74px;font-size:15px;letter-spacing:-.4px;line-height:23px}
.note{padding:3px 0 0 19px;width:65px}
.desk{width:1px;height:50px;background:#84758a;margin-right:5px}
```
